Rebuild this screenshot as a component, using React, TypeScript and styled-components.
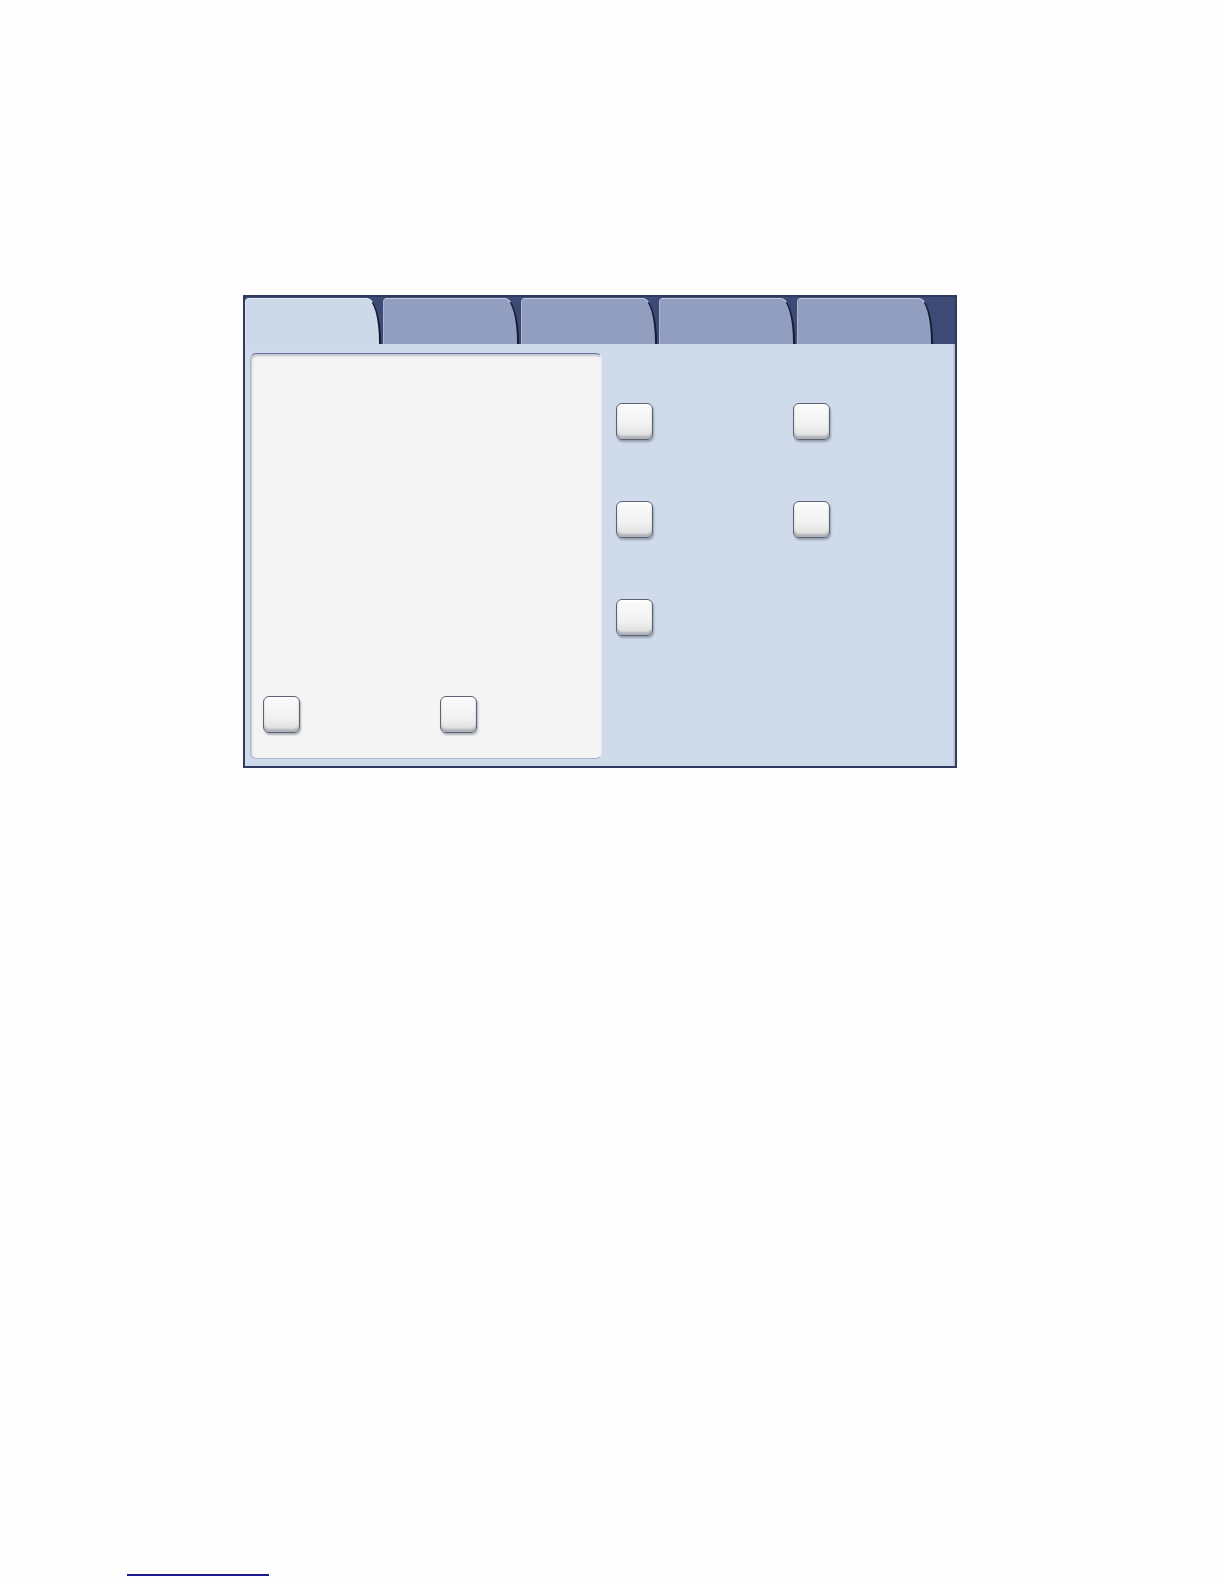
import React from "react";
import styled, { createGlobalStyle } from "styled-components";

const GlobalStyle = createGlobalStyle`
  html, body {
    margin: 0;
    padding: 0;
    background: #fefefe;
    font-family: "Liberation Sans", Arial, sans-serif;
  }
`;

const Page = styled.div`
  width: 1224px;
  height: 1584px;
  box-sizing: border-box;
  padding: 295px 0 0 243px;
`;

const Frame = styled.div`
  width: 714px;
  height: 473px;
  box-sizing: border-box;
  border: 2px solid #2f3a5e;
  background: #3d4a75;
  display: flex;
  flex-direction: column;
`;

const TabBar = styled.div`
  display: flex;
  gap: 2px;
  height: 47px;
  padding-top: 1px;
  box-sizing: border-box;
`;

const Tab = styled.div<{ $active?: boolean }>`
  width: 136px;
  height: 100%;
  flex-shrink: 0;
  box-sizing: border-box;
  background: ${(p) => (p.$active ? "#cdd9e8" : "#919ebf")};
  border-top: 1px solid ${(p) => (p.$active ? "#e4ecf5" : "#c3cbe0")};
  border-left: 1px solid ${(p) => (p.$active ? "#dfe7f2" : "#aab5d0")};
  border-right: 2px solid #141c33;
  border-top-left-radius: 4px;
  border-top-right-radius: 14px 44px;
`;

const Body = styled.div`
  flex: 1;
  display: flex;
  background: #cfdbea;
  border-right: 2px solid #b9c3d6;
  padding: 9px 0 7px 5px;
  box-sizing: border-box;
`;

const Panel = styled.div`
  width: 352px;
  flex-shrink: 0;
  box-sizing: border-box;
  background: #f4f4f4;
  border: 1px solid #a9b5cb;
  border-top-color: #66719a;
  border-right-color: #e6ebf3;
  border-radius: 6px;
  box-shadow: inset 1px 2px 2px rgba(70, 85, 120, 0.3);
  display: flex;
  flex-direction: column;
  justify-content: flex-end;
  padding: 0 0 25px 12px;
`;

const PanelRow = styled.div`
  display: flex;
  gap: 140px;
`;

const Options = styled.div`
  display: grid;
  grid-template-columns: 177px 37px;
  grid-auto-rows: 37px;
  row-gap: 61px;
  padding: 50px 0 0 14px;
  align-content: start;
`;

const Key = styled.div`
  width: 37px;
  height: 37px;
  box-sizing: border-box;
  border: 1px solid #5c6274;
  border-radius: 6px;
  background: linear-gradient(#fbfbfb 0%, #f1f1f1 60%, #dcdcdc 100%);
  box-shadow: inset 0 -3px 2px rgba(120, 125, 140, 0.45),
    inset 0 2px 1px #ffffff, 1px 2px 2px rgba(40, 45, 60, 0.35);
`;

const LinkRule = styled.div`
  width: 142px;
  height: 2px;
  background: #1b1b8e;
  margin: 806px 0 0 -116px;
`;

export default function App() {
  return (
    <>
      <GlobalStyle />
      <Page>
        <Frame>
          <TabBar>
            <Tab $active />
            <Tab />
            <Tab />
            <Tab />
            <Tab />
          </TabBar>
          <Body>
            <Panel>
              <PanelRow>
                <Key />
                <Key />
              </PanelRow>
            </Panel>
            <Options>
              <Key />
              <Key />
              <Key />
              <Key />
              <Key />
            </Options>
          </Body>
        </Frame>
        <LinkRule />
      </Page>
    </>
  );
}
